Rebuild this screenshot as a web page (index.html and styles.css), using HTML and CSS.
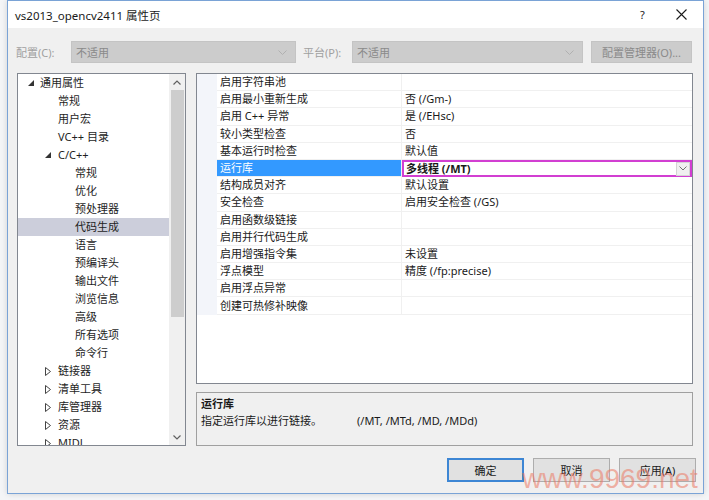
FILE: index.html
```html
<!DOCTYPE html>
<html lang="zh-CN">
<head>
<meta charset="utf-8">
<title>vs2013_opencv2411 属性页</title>
<link rel="stylesheet" href="styles.css">
</head>
<body>
<div class="dialog">
  <div class="titlebar">
    <span class="title">vs2013_opencv2411 属性页</span>
    <span class="help">?</span>
    <svg class="close" width="11" height="11" viewBox="0 0 11 11"><path d="M0.5 0.5 L10.5 10.5 M10.5 0.5 L0.5 10.5" stroke="#1a1a1a" stroke-width="1.1" fill="none"/></svg>
  </div>
  <div class="body">
    <div class="toolbar">
      <span class="lbl lbl1">配置(C):</span>
      <div class="combo combo1"><span>不适用</span><svg width="9" height="5" viewBox="0 0 9 5"><path d="M0.5 0.5 L4.5 4.5 L8.5 0.5" stroke="#b0b0b0" fill="none"/></svg></div>
      <span class="lbl lbl2">平台(P):</span>
      <div class="combo combo2"><span>不适用</span><svg width="9" height="5" viewBox="0 0 9 5"><path d="M0.5 0.5 L4.5 4.5 L8.5 0.5" stroke="#b0b0b0" fill="none"/></svg></div>
      <div class="mgr">配置管理器(O)...</div>
    </div>
    <div class="main">
      <div class="tree">
        <div class="tree-list">
          <div class="node l0"><span class="tw"><svg width="6" height="6" viewBox="0 0 6 6"><polygon points="6,0 6,6 0,6" fill="#333"/></svg></span>通用属性</div>
          <div class="node l1"><span class="tw"></span>常规</div>
          <div class="node l1"><span class="tw"></span>用户宏</div>
          <div class="node l1"><span class="tw"></span>VC++ 目录</div>
          <div class="node l1b"><span class="tw"><svg width="6" height="6" viewBox="0 0 6 6"><polygon points="6,0 6,6 0,6" fill="#333"/></svg></span>C/C++</div>
          <div class="node l2"><span class="tw"></span>常规</div>
          <div class="node l2"><span class="tw"></span>优化</div>
          <div class="node l2"><span class="tw"></span>预处理器</div>
          <div class="node l2 sel"><span class="tw"></span>代码生成</div>
          <div class="node l2"><span class="tw"></span>语言</div>
          <div class="node l2"><span class="tw"></span>预编译头</div>
          <div class="node l2"><span class="tw"></span>输出文件</div>
          <div class="node l2"><span class="tw"></span>浏览信息</div>
          <div class="node l2"><span class="tw"></span>高级</div>
          <div class="node l2"><span class="tw"></span>所有选项</div>
          <div class="node l2"><span class="tw"></span>命令行</div>
          <div class="node l1b"><span class="tw"><svg width="6" height="9" viewBox="0 0 6 9"><polygon points="0.5,0.5 5.5,4.5 0.5,8.5" fill="none" stroke="#444"/></svg></span>链接器</div>
          <div class="node l1b"><span class="tw"><svg width="6" height="9" viewBox="0 0 6 9"><polygon points="0.5,0.5 5.5,4.5 0.5,8.5" fill="none" stroke="#444"/></svg></span>清单工具</div>
          <div class="node l1b"><span class="tw"><svg width="6" height="9" viewBox="0 0 6 9"><polygon points="0.5,0.5 5.5,4.5 0.5,8.5" fill="none" stroke="#444"/></svg></span>库管理器</div>
          <div class="node l1b"><span class="tw"><svg width="6" height="9" viewBox="0 0 6 9"><polygon points="0.5,0.5 5.5,4.5 0.5,8.5" fill="none" stroke="#444"/></svg></span>资源</div>
          <div class="node l1b"><span class="tw"><svg width="6" height="9" viewBox="0 0 6 9"><polygon points="0.5,0.5 5.5,4.5 0.5,8.5" fill="none" stroke="#444"/></svg></span>MIDL</div>
        </div>
        <div class="scrollbar">
          <div class="arrow"><svg width="8" height="5" viewBox="0 0 8 5"><path d="M0.5 4.5 L4 1 L7.5 4.5" stroke="#606060" stroke-width="1.2" fill="none"/></svg></div>
          <div class="track"><div class="thumb"></div></div>
          <div class="arrow"><svg width="8" height="5" viewBox="0 0 8 5"><path d="M0.5 0.5 L4 4 L7.5 0.5" stroke="#606060" stroke-width="1.2" fill="none"/></svg></div>
        </div>
      </div>
      <div class="right">
        <div class="grid">
          <div class="rows">
            <div class="row"><div class="name">启用字符串池</div><div class="val"></div></div>
            <div class="row"><div class="name">启用最小重新生成</div><div class="val">否 (/Gm-)</div></div>
            <div class="row"><div class="name">启用 C++ 异常</div><div class="val">是 (/EHsc)</div></div>
            <div class="row"><div class="name">较小类型检查</div><div class="val">否</div></div>
            <div class="row"><div class="name">基本运行时检查</div><div class="val">默认值</div></div>
            <div class="row active"><div class="name">运行库</div><div class="val"><b>多线程 (/MT)</b><span class="dd"><svg width="8" height="5" viewBox="0 0 8 5"><path d="M0.5 0.5 L4 4 L7.5 0.5" stroke="#707070" fill="none"/></svg></span></div></div>
            <div class="row"><div class="name">结构成员对齐</div><div class="val">默认设置</div></div>
            <div class="row"><div class="name">安全检查</div><div class="val">启用安全检查 (/GS)</div></div>
            <div class="row"><div class="name">启用函数级链接</div><div class="val"></div></div>
            <div class="row"><div class="name">启用并行代码生成</div><div class="val"></div></div>
            <div class="row"><div class="name">启用增强指令集</div><div class="val">未设置</div></div>
            <div class="row"><div class="name">浮点模型</div><div class="val">精度 (/fp:precise)</div></div>
            <div class="row"><div class="name">启用浮点异常</div><div class="val"></div></div>
            <div class="row"><div class="name">创建可热修补映像</div><div class="val"></div></div>
          </div>
        </div>
        <div class="desc">
          <div class="desc-title">运行库</div>
          <div class="desc-text"><span class="desc-main">指定运行库以进行链接。</span><span>(/MT, /MTd, /MD, /MDd)</span></div>
        </div>
      </div>
    </div>
    <div class="buttons">
      <div class="btn default">确定</div>
      <div class="btn">取消</div>
      <div class="btn">应用(A)</div>
    </div>
  </div>
  <div class="watermark">www.9969.net</div>
</div>
</body>
</html>
```
FILE: styles.css
```css
* { box-sizing: border-box; }
html, body { margin: 0; padding: 0; }
body {
  width: 709px;
  height: 500px;
  overflow: hidden;
  background: #f4f5f7;
  padding-left: 7px;
  font-family: "Noto Sans", "Noto Sans CJK SC", sans-serif;
  font-size: 11px;
  color: #1a1a1a;
}
.dialog {
  position: relative;
  width: 697px;
  height: 494px;
  border: 1px solid #7aa3d6;
  background: #f0f0f0;
  display: flex;
  flex-direction: column;
  box-shadow: 0 0 6px rgba(0,0,0,0.15);
}
.titlebar {
  height: 27px;
  background: #fff;
  display: flex;
  align-items: center;
  padding-left: 7px;
}
.title { font-size: 11.5px; flex: 1; }
.help { font-size: 11px; width: 12px; margin-right: 24px; }
.close { margin-right: 16px; }
.body {
  flex: 1;
  display: flex;
  flex-direction: column;
  padding: 13px 10px 0 9px;
}
.toolbar {
  height: 22px;
  display: flex;
  align-items: center;
  margin-left: -1px;
}
.lbl { color: #a0a0a0; }
.lbl1 { width: 55px; }
.lbl2 { width: 49px; margin-left: 7px; }
.combo {
  height: 22px;
  background: #cccccc;
  border: 1px solid #c4c4c4;
  display: flex;
  align-items: center;
  justify-content: space-between;
  padding: 0 8px 0 4px;
  color: #8a8a8a;
}
.combo1 { width: 225px; }
.combo2 { width: 231px; }
.mgr {
  margin-left: 8px;
  width: 101px;
  height: 22px;
  background: #cccccc;
  border: 1px solid #c4c4c4;
  color: #8a8a8a;
  display: flex;
  align-items: center;
  justify-content: center;
}
.main {
  margin-top: 10px;
  height: 373px;
  display: flex;
  gap: 10px;
}
.tree {
  width: 169px;
  border: 1px solid #828790;
  background: #fff;
  display: flex;
  overflow: hidden;
}
.tree-list {
  width: 151px;
  overflow: hidden;
}
.node {
  height: 18px;
  line-height: 18px;
  display: flex;
  align-items: center;
  white-space: nowrap;
  color: #1e1e1e;
}
.node .tw {
  width: 12px;
  height: 18px;
  display: flex;
  align-items: center;
  flex-shrink: 0;
}
.l0 { padding-left: 10px; }
.l1 { padding-left: 28px; }
.l1b { padding-left: 27px; }
.l1b .tw { width: 13px; }
.l2 { padding-left: 45px; }
.sel { background: #cccedb; }
.scrollbar {
  width: 16px;
  display: flex;
  flex-direction: column;
  background: #f0f0f0;
}
.scrollbar .arrow {
  height: 16px;
  display: flex;
  align-items: center;
  justify-content: center;
}
.track { flex: 1; padding: 0 1px 0 2px; }
.thumb { height: 227px; background: #cdcdcd; }
.right {
  width: 497px;
  display: flex;
  flex-direction: column;
  gap: 8px;
}
.grid {
  height: 313px;
  border: 1px solid #828790;
  background: #fff;
}
.rows {
  background: #f3f5fa;
  padding-left: 20px;
}
.row {
  height: 17.2px;
  line-height: 16px;
  display: flex;
  background: #fff;
  border-bottom: 1px solid #f0f0f0;
}
.name {
  width: 185px;
  padding-left: 3px;
  border-right: 1px solid #f0f0f0;
  white-space: nowrap;
  display: flex;
  align-items: center;
}
.val {
  flex: 1;
  padding-left: 3px;
  white-space: nowrap;
  position: relative;
  display: flex;
  align-items: center;
}
.row.active .name { background: #3399ff; color: #fff; }
.row.active .val {
  box-shadow: inset 0 0 0 2px #d23fd2;
  margin-bottom: -1px;
  padding-left: 4px;
}
.row.active b { font-weight: 700; }
.dd {
  position: absolute;
  right: 2px;
  top: 2px;
  width: 14px;
  height: 14px;
  background: #f0f0f0;
  border: 1px solid #d4d4d4;
  display: flex;
  align-items: center;
  justify-content: center;
}
.desc {
  height: 54px;
  border: 1px solid #a0a0a0;
  background: #f0f0f0;
  padding: 2px 4px;
  line-height: 17px;
}
.desc-title { font-weight: 700; }
.desc-main { display: inline-block; width: 156px; }
.buttons {
  margin-top: 12px;
  display: flex;
  justify-content: flex-end;
  gap: 9px;
  margin-right: -3px;
}
.btn {
  width: 77px;
  height: 24px;
  background: #e1e1e1;
  border: 1px solid #adadad;
  display: flex;
  align-items: center;
  justify-content: center;
}
.btn.default { border: 2px solid #3d86d4; }
.watermark {
  position: absolute;
  left: 514px;
  top: 462px;
  font-family: "Liberation Sans", sans-serif;
  font-size: 28px;
  color: rgba(236, 118, 96, 0.55);
  white-space: nowrap;
  pointer-events: none;
}
```
